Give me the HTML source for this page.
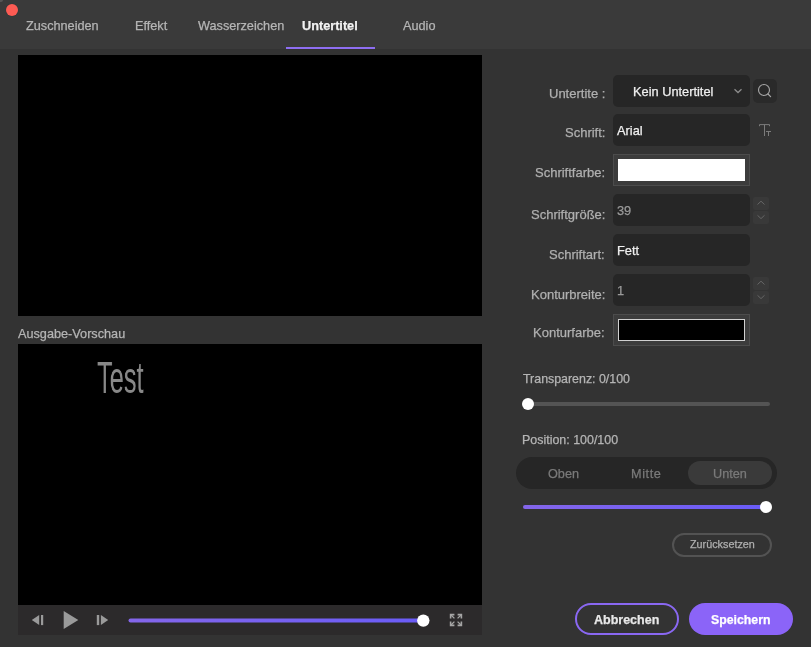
<!DOCTYPE html>
<html><head><meta charset="utf-8">
<style>
*{box-sizing:border-box;margin:0;padding:0}
html,body{width:811px;height:647px;overflow:hidden;background:#333333;font-family:"Liberation Sans",sans-serif;}
.a{position:absolute;white-space:nowrap;line-height:1;-webkit-text-stroke:0.25px currentColor;will-change:transform}
#hdr{position:absolute;left:0;top:0;width:811px;height:49px;background:#3a3a3a}
.dot{position:absolute;left:5.8px;top:3.8px;width:12.4px;height:12.4px;border-radius:50%;background:#fd5b53;box-shadow:0 0 0 0.6px #2f3a3a}
.tab{font-size:12.7px;color:#b5b5b5;top:20px}
.ul{position:absolute;left:286px;top:47px;width:89px;height:2px;background:#8e6ef2}
.vid{position:absolute;left:18px;width:464px;background:#000}
.lbl{font-size:13px;color:#b0b0b0;text-align:right;right:206px}
.box{position:absolute;left:613px;width:137px;height:32px;background:#262626;border-radius:5px}
.txt{font-size:12.8px;color:#f0f0f0}
.sw{position:absolute;left:613px;width:137px;height:32px;background:#3c3c3c;border:1px solid #4c4c4c}
.step{position:absolute;left:753px;width:16px;height:12.5px;background:#393939;border-radius:2px}
</style></head><body>
<div id="hdr">
  <div class="dot"></div><div style="position:absolute;left:0;top:0;width:3px;height:2px;border-radius:0 0 3px 0;background:#555;filter:blur(0.6px)"></div>
  <div class="a tab" style="left:26px">Zuschneiden</div>
  <div class="a tab" style="left:135px">Effekt</div>
  <div class="a tab" style="left:198px">Wasserzeichen</div>
  <div class="a tab" style="left:302px;font-weight:bold;color:#f2f2f2">Untertitel</div>
  <div class="a tab" style="left:403px">Audio</div>
  <div class="ul"></div>
</div>
<div class="vid" style="top:55px;height:261px"></div>
<div class="a" style="left:18px;top:328px;font-size:12.7px;color:#b5b5b5">Ausgabe-Vorschau</div>
<div class="vid" style="top:344px;height:261px"></div>
<div class="a" style="left:97px;top:355px;font-size:45px;color:#888;-webkit-text-stroke:0;transform:scaleX(0.565);transform-origin:0 0">Test</div>
<div style="position:absolute;left:18px;top:605px;width:464px;height:29.5px;background:#2c2a2b"></div>

<!-- right panel -->
<div class="a lbl" style="top:87px">Untertite :</div>
<div class="box" style="top:75px"></div>
<div class="a txt" style="left:633px;top:86px">Kein Untertitel</div>
<div style="position:absolute;left:753px;top:79px;width:24px;height:24px;background:#2a2a2a;border-radius:5px"></div>


<div class="a lbl" style="top:126px">Schrift:</div>
<div class="box" style="top:114px"></div>
<div class="a txt" style="left:617px;top:125px">Arial</div>

<div class="a lbl" style="top:166px">Schriftfarbe:</div>
<div class="sw" style="top:154px"><div style="position:absolute;left:4px;top:4px;width:127px;height:22px;background:#fff"></div></div>

<div class="a lbl" style="top:208px">Schriftgröße:</div>
<div class="box" style="top:194px"></div>
<div class="a txt" style="left:617px;top:205px;color:#9a9a9a">39</div>
<div class="step" style="top:197px"></div>
<div class="step" style="top:211px"></div>

<div class="a lbl" style="top:248px">Schriftart:</div>
<div class="box" style="top:234px"></div>
<div class="a txt" style="left:617px;top:245px">Fett</div>

<div class="a lbl" style="top:288px">Konturbreite:</div>
<div class="box" style="top:274px"></div>
<div class="a txt" style="left:617px;top:285px;color:#9a9a9a">1</div>
<div class="step" style="top:277px"></div>
<div class="step" style="top:291px"></div>

<div class="a lbl" style="top:326px">Konturfarbe:</div>
<div class="sw" style="top:314px"><div style="position:absolute;left:4px;top:4px;width:127px;height:22px;background:#000;border:1px solid #d0d0d0"></div></div>

<div class="a" style="left:523px;top:373px;font-size:12.4px;color:#b5b5b5">Transparenz: 0/100</div>
<div style="position:absolute;left:523px;top:402px;width:247px;height:4px;background:#545454;border-radius:2px"></div>
<div style="position:absolute;left:522px;top:398px;width:12px;height:12px;background:#fff;border-radius:50%"></div>

<div class="a" style="left:522px;top:434px;font-size:12.45px;color:#b5b5b5">Position: 100/100</div>
<div style="position:absolute;left:516px;top:457px;width:261px;height:32px;background:#262626;border-radius:16px"></div>
<div style="position:absolute;left:688px;top:461px;width:84px;height:24px;background:#3a3a3a;border-radius:12px"></div>
<div class="a" style="left:548px;top:468px;font-size:12.7px;color:#7a7a7a">Oben</div>
<div class="a" style="left:631px;top:468px;font-size:12.7px;color:#7a7a7a;letter-spacing:0.6px">Mitte</div>
<div class="a" style="left:713px;top:468px;font-size:12.7px;color:#7a7a7a">Unten</div>
<div style="position:absolute;left:523px;top:505px;width:243px;height:4px;background:linear-gradient(90deg,#8466ea,#6a5cf8);border-radius:2px"></div>
<div style="position:absolute;left:760px;top:501px;width:12px;height:12px;background:#fff;border-radius:50%"></div>

<div style="position:absolute;left:672px;top:533px;width:100px;height:24px;border:2px solid #535353;border-radius:12px"></div>
<div class="a" style="left:690px;top:539px;font-size:10.8px;color:#b0b0b0">Zurücksetzen</div>

<div style="position:absolute;left:575px;top:603px;width:104px;height:32px;border:2px solid #8a68f2;border-radius:16px"></div>
<div class="a" style="left:594px;top:614px;font-size:12.5px;font-weight:bold;color:#e8e8e8">Abbrechen</div>
<div style="position:absolute;left:689px;top:603px;width:104px;height:32px;background:#8b64f8;border-radius:16px"></div>
<div class="a" style="left:711px;top:614px;font-size:12.3px;font-weight:bold;color:#fff">Speichern</div>
<svg style="position:absolute;left:0;top:0" width="811" height="647" viewBox="0 0 811 647">
<circle cx="764" cy="90" r="5.5" fill="none" stroke="#a4a4a4" stroke-width="1.15"/>
<line x1="768" y1="94" x2="770.6" y2="96.6" stroke="#a8a8a8" stroke-width="1.2" stroke-linecap="round"/>
<polyline points="734.5,89.3 738,92.5 741.5,89.3" fill="none" stroke="#8c8c8c" stroke-width="1.3"/>
<g stroke="#7c7c7c" stroke-width="1" fill="none">
<path d="M759.5,126.2 V124.6 H769.5 V126.2"/>
<path d="M764.5,124.6 V136"/>
<path d="M766,131.5 H771"/>
<path d="M768.5,131.5 V136"/>
</g>
<g stroke="#666" stroke-width="1" fill="none">
<polyline points="757.5,204.5 761,201.2 764.5,204.5"/>
<polyline points="757.5,215.3 761,218.6 764.5,215.3"/>
<polyline points="757.5,284.5 761,281.2 764.5,284.5"/>
<polyline points="757.5,295.3 761,298.6 764.5,295.3"/>
</g>
<defs><linearGradient id="pg" gradientUnits="userSpaceOnUse" x1="128" x2="424" y1="0" y2="0"><stop offset="0" stop-color="#8466ea"/><stop offset="1" stop-color="#6a5cf8"/></linearGradient></defs>
<g fill="#9a9a9a">
<path d="M31.8,620 L39.2,614.9 V625.1 Z"/>
<rect x="41" y="615" width="2.2" height="10.1"/>
<path d="M63.7,611 L78.3,620 L63.7,629 Z"/>
<rect x="96.8" y="615" width="2.4" height="10.1"/>
<path d="M100.9,614.9 L108.2,620 L100.9,625.1 Z"/>
</g>
<line x1="130.5" y1="620.5" x2="421" y2="620.5" stroke="url(#pg)" stroke-width="4" stroke-linecap="round"/>
<circle cx="423.3" cy="620.6" r="6.2" fill="#fff"/>
<g fill="none" stroke="#a5a5a5">
<polyline points="450.6,618.4 450.6,614.6 454.4,614.6" stroke-width="1.6"/>
<line x1="451" y1="615" x2="454.4" y2="618.4" stroke-width="1.3"/>
<polyline points="461.4,618.4 461.4,614.6 457.6,614.6" stroke-width="1.6"/>
<line x1="461" y1="615" x2="457.6" y2="618.4" stroke-width="1.3"/>
<polyline points="450.6,621.6 450.6,625.4 454.4,625.4" stroke-width="1.6"/>
<line x1="451" y1="625" x2="454.4" y2="621.6" stroke-width="1.3"/>
<polyline points="461.4,621.6 461.4,625.4 457.6,625.4" stroke-width="1.6"/>
<line x1="461" y1="625" x2="457.6" y2="621.6" stroke-width="1.3"/>
</g>
</svg>
</body></html>
